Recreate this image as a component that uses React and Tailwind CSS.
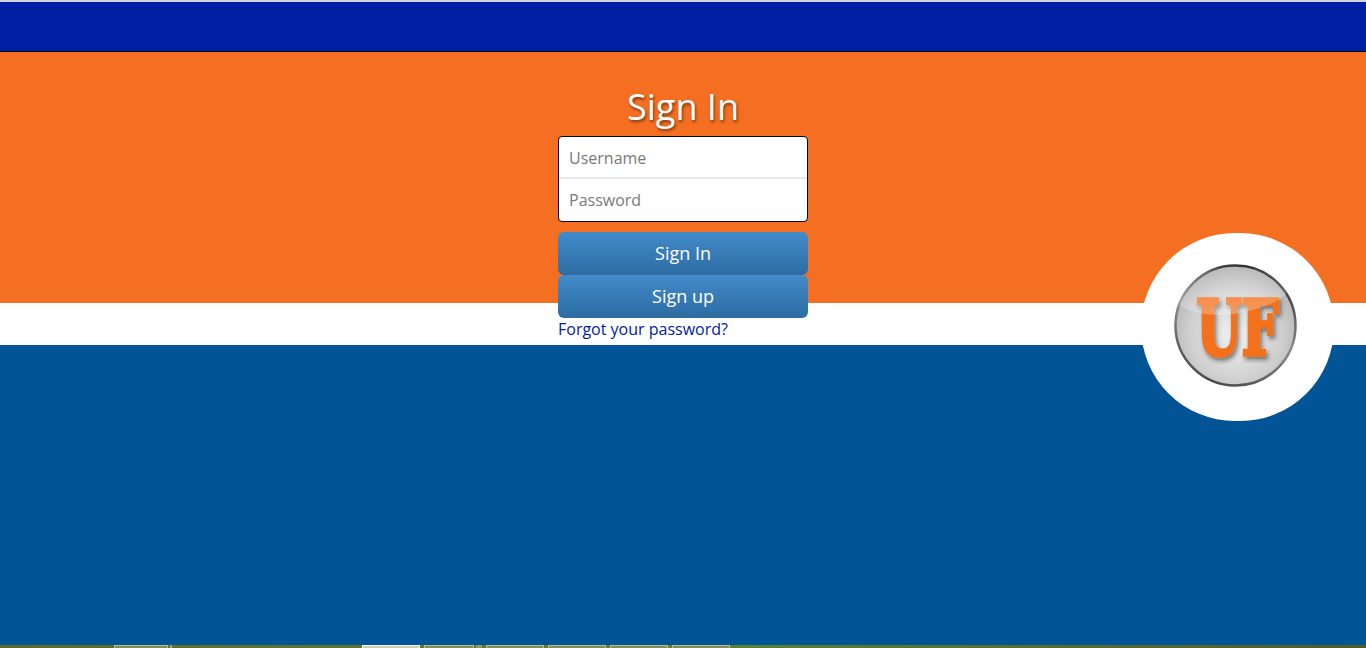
export default function App() {
  return (
    <div className="relative h-[648px] overflow-hidden font-['Open_Sans',sans-serif]">
      <div className="h-[2px] bg-[#d3d5de]" />
      <div className="h-[49px] bg-[#0020a3]" />
      <div className="h-px bg-[#0a0a1e]" />
      <div className="h-[251px] bg-[#f46f21]" />
      <div className="h-[42px] bg-white" />
      <div className="h-[300px] bg-[#015496]" />
      <BottomStrip />

      {/* form sits over the colour bands */}
      <div className="absolute left-[558px] top-[84px] w-[250px]">
        <h1 className="h-[52px] text-center text-[36px] leading-[45px] text-white [text-shadow:1px_2px_3px_rgba(0,0,0,0.5)]">
          Sign In
        </h1>
        <div className="overflow-hidden rounded-[4px] border border-black bg-white">
          <input
            placeholder="Username"
            className="block h-[42px] w-full border-b-2 border-[#e8e8ea] px-[10px] pt-[2px] text-base text-[#555] outline-none placeholder:text-[#7a7a7a]"
          />
          <input
            type="password"
            placeholder="Password"
            className="block h-[42px] w-full px-[10px] text-base text-[#555] outline-none placeholder:text-[#7a7a7a]"
          />
        </div>
        <button className="mt-[10px] block h-[43px] w-full rounded-[6px] bg-gradient-to-b from-[#428bca] to-[#2d6ca2] text-[18px] text-white">
          Sign In
        </button>
        <button className="block h-[43px] w-full rounded-[6px] bg-gradient-to-b from-[#428bca] to-[#2d6ca2] text-[18px] text-white">
          Sign up
        </button>
        <a href="#" className="mt-[1px] block text-base leading-[21px] text-[#0021a5]">
          Forgot your password?
        </a>
      </div>

      <Logo />
    </div>
  );
}

const tabClass = 'border-x border-t border-[#b4bb98] bg-[#7f8c5c]';

function BottomStrip() {
  const tabs = [
    [114, 54, tabClass],
    [168, 2, ''],
    [170, 2, 'bg-[#9aa67c]'],
    [172, 190, ''],
    [362, 58, 'border-t border-x border-[#f4f5ee] bg-[#c9cfb4]'],
    [420, 4, ''],
    [424, 50, tabClass],
    [474, 2, ''],
    [476, 6, 'bg-[#8f9b6c]'],
    [482, 4, ''],
    [486, 58, tabClass],
    [544, 4, ''],
    [548, 58, tabClass],
    [606, 4, ''],
    [610, 58, tabClass],
    [668, 4, ''],
    [672, 58, tabClass],
  ];
  return (
    <div className="flex h-[3px] bg-gradient-to-r from-[#5a6a2c] via-[#5d8136] to-[#4e5d2a]">
      <div className="w-[114px]" />
      {tabs.map(([left, width, color]) => (
        <div key={left} style={{ width }} className={color} />
      ))}
    </div>
  );
}

function Logo() {
  return (
    <div className="absolute left-[1141px] top-[233px] h-[188px] w-[193px] rounded-full bg-white">
      <svg width="193" height="188" viewBox="0 0 193 188">
        <defs>
          <radialGradient id="disc" cx="50%" cy="58%" r="55%">
            <stop offset="0" stopColor="#f2f2f2" />
            <stop offset="0.7" stopColor="#cfcfcf" />
            <stop offset="1" stopColor="#b6b6b6" />
          </radialGradient>
          <linearGradient id="rim" x1="0.7" y1="0" x2="0.3" y2="1">
            <stop offset="0" stopColor="#2a2a2a" />
            <stop offset="0.5" stopColor="#8c8c8c" />
            <stop offset="1" stopColor="#484848" />
          </linearGradient>
          <linearGradient id="gloss" x1="0" y1="0" x2="0" y2="1">
            <stop offset="0" stopColor="#fff" stopOpacity="0.08" />
            <stop offset="1" stopColor="#fff" stopOpacity="0.28" />
          </linearGradient>
          <filter id="letterShadow" x="-20%" y="-20%" width="140%" height="140%">
            <feDropShadow dx="2" dy="3" stdDeviation="2" floodColor="#222" floodOpacity="0.55" />
          </filter>
        </defs>
        <circle cx="94.5" cy="92.5" r="60" fill="url(#disc)" stroke="url(#rim)" strokeWidth="2.5" />
        <text
          x="96.5"
          y="122"
          textAnchor="middle"
          fontFamily="'DejaVu Serif Condensed', 'DejaVu Serif', serif"
          fontWeight="700"
          fontSize="76"
          textLength="82"
          lengthAdjust="spacingAndGlyphs"
          fill="#f4711f"
          stroke="#f4711f"
          strokeWidth="3.5"
          filter="url(#letterShadow)"
        >
          UF
        </text>
        <path d="M38 72 C38 44 66 34 94 34 C122 34 144 42 146 60 C128 78 70 92 38 72 Z" fill="url(#gloss)" />
      </svg>
    </div>
  );
}
